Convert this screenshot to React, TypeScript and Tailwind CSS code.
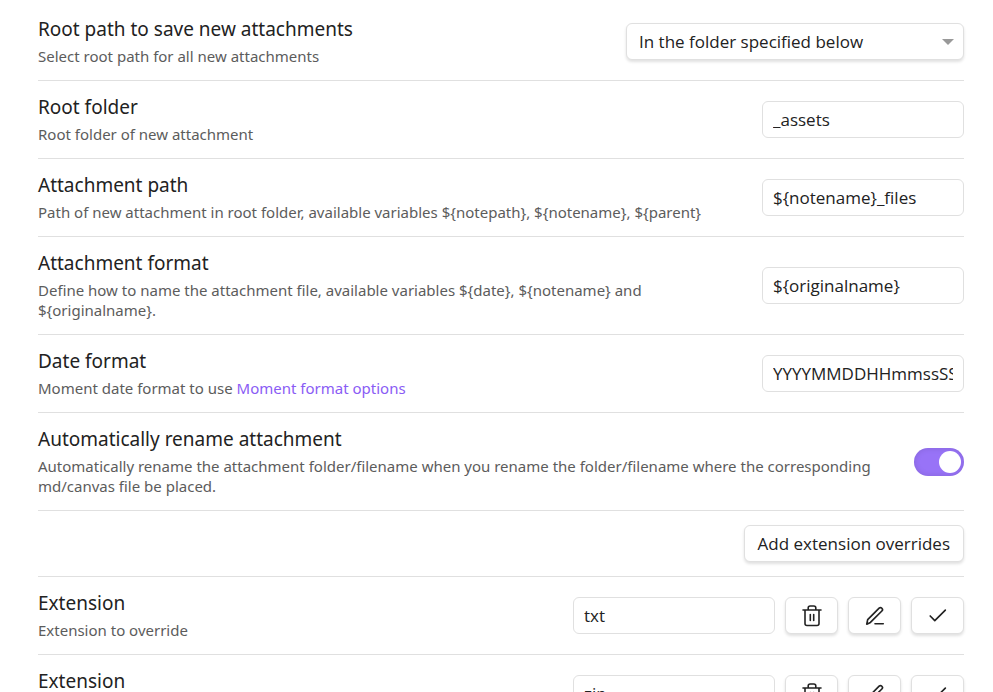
import { useId, useState } from 'react';
import type { ReactNode } from 'react';

const fieldClass =
  "h-[37px] w-[202px] rounded-[6px] border border-[#e0e0e0] bg-white px-[10px] font-['Open_Sans',sans-serif] text-[17px] text-[#222222] outline-none focus:border-[#bdbdbd]";

const raisedClass =
  'flex h-[37px] items-center justify-center rounded-[6px] border border-[#e0e0e0] bg-white text-[#222222] shadow-[0_2px_3px_rgba(0,0,0,0.12)]';

type RowProps = {
  name: string;
  description: ReactNode;
  controlId: string;
  children: ReactNode;
};

function SettingRow({ name, description, controlId, children }: RowProps) {
  return (
    <div className="flex items-center gap-5 border-b border-[#e0e0e0] py-[14px]">
      <div className="min-w-0 flex-1">
        <label htmlFor={controlId} className="block text-[19px] leading-6 text-[#222222]">
          {name}
        </label>
        <p className="mt-[5px] text-[15px] leading-5 text-[#5c5c5c]">{description}</p>
      </div>
      <div className="flex shrink-0 items-center gap-[10px]">{children}</div>
    </div>
  );
}

type TextSettingProps = { name: string; description: ReactNode; value: string };

function TextSetting({ name, description, value }: TextSettingProps) {
  const id = useId();
  return (
    <SettingRow name={name} description={description} controlId={id}>
      <input id={id} type="text" defaultValue={value} spellCheck={false} className={fieldClass} />
    </SettingRow>
  );
}

function TrashIcon() {
  return (
    <svg width="22" height="22" viewBox="0 0 22 22" fill="none" stroke="currentColor" strokeWidth="1.6" strokeLinecap="round" strokeLinejoin="round" aria-hidden="true">
      <path d="M2 5h18M4 5v13.500a2 2 0 0 0 2 2h10a2 2 0 0 0 2-2V5M7.200 5V3a2 2 0 0 1 2-2h3.600a2 2 0 0 1 2 2v2M9.300 9.500v6M12.700 9.500v6" />
    </svg>
  );
}

function PencilIcon() {
  return (
    <svg width="22" height="22" viewBox="0 0 24 24" fill="none" stroke="currentColor" strokeWidth="1.8" strokeLinecap="round" strokeLinejoin="round" aria-hidden="true">
      <path d="M12 20.500h9" />
      <path d="M16.500 3.500a2.120 2.120 0 0 1 3 3L7 19l-4 2 1-5z" />
    </svg>
  );
}

function CheckIcon() {
  return (
    <svg width="22" height="22" viewBox="0 0 24 24" fill="none" stroke="currentColor" strokeWidth="1.8" strokeLinecap="round" strokeLinejoin="round" aria-hidden="true">
      <path d="M20 5.500 8.500 17 3.500 12" />
    </svg>
  );
}

function ExtensionSetting({ value }: { value: string }) {
  const id = useId();
  const buttonClass = `${raisedClass} w-[53px]`;
  return (
    <SettingRow name="Extension" description="Extension to override" controlId={id}>
      <input id={id} type="text" defaultValue={value} spellCheck={false} className={fieldClass} />
      <button type="button" aria-label="Remove" className={buttonClass}>
        <TrashIcon />
      </button>
      <button type="button" aria-label="Edit" className={buttonClass}>
        <PencilIcon />
      </button>
      <button type="button" aria-label="Save" className={buttonClass}>
        <CheckIcon />
      </button>
    </SettingRow>
  );
}

export default function App() {
  const [autoRename, setAutoRename] = useState(true);
  return (
    <main className="h-screen overflow-hidden bg-white pr-[29px] pl-[38px] pt-[3px] font-['Noto_Sans',sans-serif]">
      <SettingRow
        name="Root path to save new attachments"
        description="Select root path for all new attachments"
        controlId="root-path"
      >
        <div className="grid items-center">
          <select
            id="root-path"
            className="col-start-1 row-start-1 h-[37px] w-[338px] appearance-none rounded-[6px] border border-[#e0e0e0] bg-white pr-8 pl-3 font-['Open_Sans',sans-serif] text-[17px] text-[#222222] shadow-[0_2px_3px_rgba(0,0,0,0.12)] outline-none"
          >
            <option>In the folder specified below</option>
          </select>
          <svg className="pointer-events-none col-start-1 row-start-1 mr-[10px] justify-self-end" width="12" height="6" viewBox="0 0 12 6" aria-hidden="true">
            <path d="M0 0h12L6 6z" fill="#999999" />
          </svg>
        </div>
      </SettingRow>
      <TextSetting name="Root folder" description="Root folder of new attachment" value="_assets" />
      <TextSetting
        name="Attachment path"
        description="Path of new attachment in root folder, available variables ${notepath}, ${notename}, ${parent}"
        value="${notename}_files"
      />
      <TextSetting
        name="Attachment format"
        description="Define how to name the attachment file, available variables ${date}, ${notename} and ${originalname}."
        value="${originalname}"
      />
      <TextSetting
        name="Date format"
        description={
          <>
            Moment date format to use{' '}
            <a href="#format-options" className="text-[#8a5cf5]">
              Moment format options
            </a>
          </>
        }
        value="YYYYMMDDHHmmssSSS"
      />
      <SettingRow
        name="Automatically rename attachment"
        description="Automatically rename the attachment folder/filename when you rename the folder/filename where the corresponding md/canvas file be placed."
        controlId="auto-rename"
      >
        <input
          id="auto-rename"
          type="checkbox"
          role="switch"
          checked={autoRename}
          onChange={(event) => setAutoRename(event.target.checked)}
          className="flex h-7 w-[50px] appearance-none items-center rounded-full bg-[#c8c8c8] p-[3px] shadow-[inset_0_0_6px_rgba(0,0,0,0.12)] before:size-[22px] before:rounded-full before:bg-white before:content-[''] checked:justify-end checked:bg-[#9873f7]"
        />
      </SettingRow>
      <div className="flex justify-end border-b border-[#e0e0e0] py-[14px]">
        <button type="button" className={`${raisedClass} px-[13px] font-['Open_Sans',sans-serif] text-[17px]`}>
          Add extension overrides
        </button>
      </div>
      <ExtensionSetting value="txt" />
      <ExtensionSetting value="zip" />
    </main>
  );
}
